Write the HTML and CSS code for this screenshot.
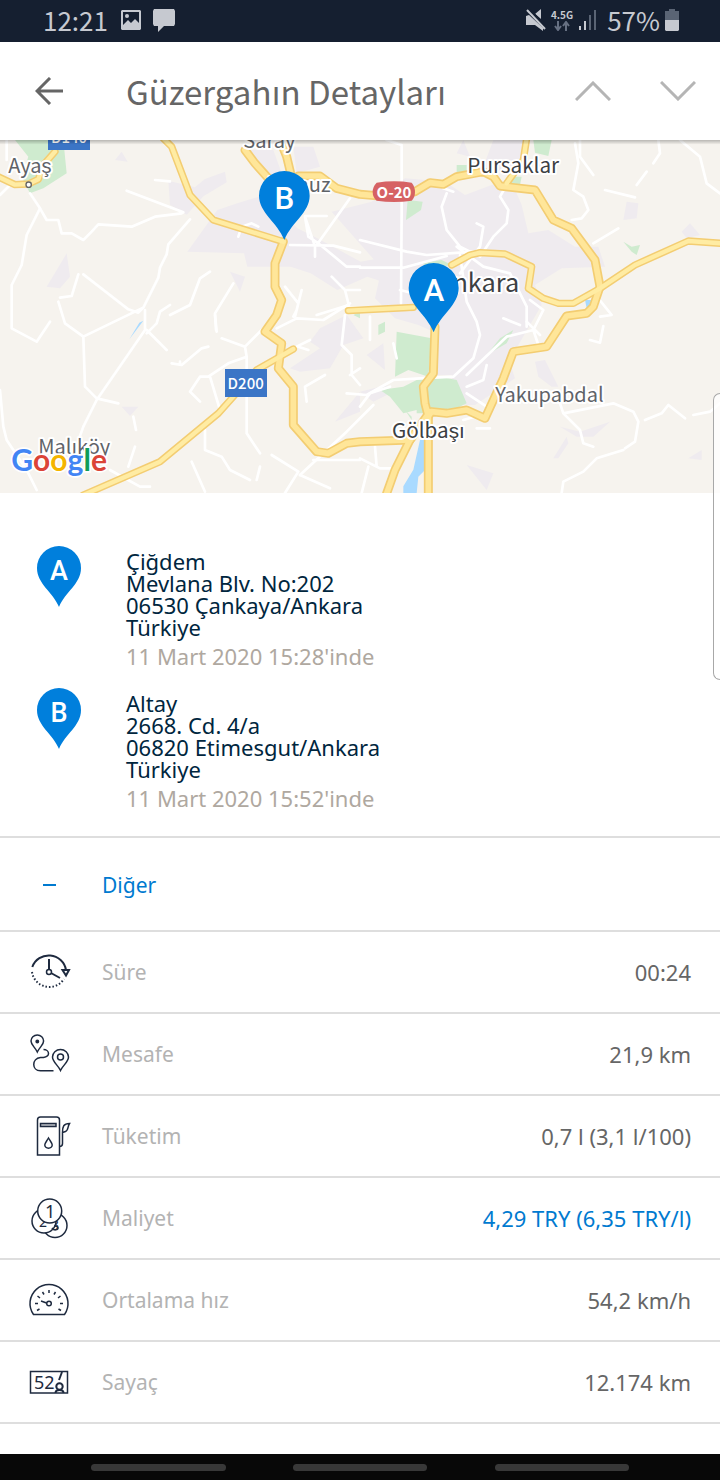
FILE: index.html
```html
<!DOCTYPE html>
<html lang="tr">

<head>
    <meta charset="UTF-8">
    <meta name="viewport" content="width=device-width, initial-scale=1.0">
    <title>Güzergahın Detayları</title>
    <link rel="stylesheet" href="styles.css">
</head>

<body>
    <div class="status-bar">
        <div class="status-left">
            <span class="clock">12:21</span>
            <svg width="22" height="22" viewBox="0 0 22 22">
                <path fill="#c6c9d0" fill-rule="evenodd" d="M2 1h18l1 1v18l-1 1H2l-1-1V2zM3 3v13l5-5 3 3 4-4 4 4V3z" />
                <circle cx="7" cy="7" r="2" fill="#c6c9d0" />
            </svg>
            <svg width="24" height="24" viewBox="0 0 24 24">
                <path fill="#c6c9d0" d="M2 1h20l1 2v13l-1 2H12l-6 6v-6H2l-1-2V3z" />
            </svg>
        </div>
        <div class="status-right">
            <svg width="20" height="22" viewBox="0 0 20 22">
                <path fill="#c6c9d0" d="M0 7l3-1 14 13v3l-8-6H0zM9 5l6-5v10z" />
                <path stroke="#151f30" stroke-width="2" d="M3 0l17 17" />
                <path stroke="#c6c9d0" stroke-width="2" d="M1 1l18 19" />
            </svg>
            <div class="network">
                <span>4.5G</span>
                <svg width="16" height="10" viewBox="0 0 16 10" fill="none" stroke="#667082" stroke-width="2">
                    <path d="M4 0v8M1 5l3 4 3-4M12 10V2M9 5l3-4 3 4" />
                </svg>
            </div>
            <svg width="20" height="22" viewBox="0 0 20 22">
                <path fill="#c6c9d0" d="M1 17h2v4H1zM6 12h2v9H6z" />
                <path fill="#5a6474" d="M11 6h2v15h-2zM16 1h2v20h-2z" />
            </svg>
            <span class="percent">57%</span>
            <svg width="14" height="22" viewBox="0 0 14 22">
                <path fill="#5a6474" d="M4 0h6v2h4v9H0V2h4z" />
                <path fill="#c6c9d0" d="M0 11h14v10l-1 1H1l-1-1z" />
            </svg>
        </div>
    </div>

    <header class="header">
        <button class="icon-btn" aria-label="Geri">
            <svg width="28" height="28" viewBox="0 0 28 28" fill="none" stroke="#666" stroke-width="3">
                <path d="M28 14H2M15 1L2 14l13 13" />
            </svg>
        </button>
        <h1>Güzergahın Detayları</h1>
        <button class="icon-btn" aria-label="Önceki">
            <svg width="36" height="20" viewBox="0 0 36 20" fill="none" stroke="#b5b5b5" stroke-width="3">
                <path d="M1 19L18 2l17 17" />
            </svg>
        </button>
        <button class="icon-btn next" aria-label="Sonraki">
            <svg width="36" height="20" viewBox="0 0 36 20" fill="none" stroke="#b5b5b5" stroke-width="3">
                <path d="M1 1l17 17L35 1" />
            </svg>
        </button>
    </header>

    <svg class="map" viewBox="0 0 2160 1059" role="img" aria-label="Harita">
        <defs>
            <linearGradient id="shade" x1="0" y1="0" x2="0" y2="1">
                <stop offset="0" stop-color="#000" stop-opacity="0.25" />
                <stop offset="1" stop-color="#000" stop-opacity="0" />
            </linearGradient>
        </defs>
        <rect width="2160" height="1059" fill="#f6f3ee" />

        <!-- built-up areas -->
        <g fill="#efebef">
            <path d="M505 122l80 20 30-25 60-22 5 32-70 42-50 55-50-30z" />
            <path d="M750 30l70 0 25 70-40 10zM880 20h60l20 60-70 20z" />
            <path d="M562 335l90-125 60-20 80-25 100 100 60 30 130 70 80-15 80 60-80 20-60-20-90 40-80-50-60-20-130 0-10-40z" />
            <path d="M995 215l120-30 100-70 120 10 60 40 80-30 60-10 30 70 20 85 60-10 80 50 70 0 20 60-130 5-80 50 20 60-70 120-30 40 20 60-120 80-60 0-20-200-90-40-70-20-60-60 20-90z" />
            <path d="M1040 525l-80 40-30 40 30 20-90 60 30 10 90-10 40-70 60-20z" />
            <path d="M1305 545h120l20 60-80 100-60 0zM1100 645l50-35 5 80z" />
            <path d="M1005 845l75-90 0 60zM1080 755l80-20 20 20-60 30z" />
            <path d="M1605 665l30-5 40 80-20 0-40-30zM1680 860l60 15 90-30-50 45-50 0zM1400 975l80 25-20 50z" />
            <path d="M1660 955l40-65 5 20-30 45zM1880 185l35 5-5 45-40 5zM2045 275l25-25 30 35-40 10zM1480 0h100l-10 60-80 40-40-20z" />
            <path d="M140 440l60-100 10 70-30 35zM690 395l45 15-15 45zM365 800h50l-25 28zM345 60l20-25 18 30zM2065 955l40-25 0 30zM1370 40l20-40 20 50z" />
        </g>

        <!-- forest and parks -->
        <g fill="#cfebcf">
            <path d="M45 0h145l10 100-70 45-40 15-25-50 20-60z" />
            <path d="M1600 0h55l-10 48-40-10zM1370 75l30 0 0 25-30 0zM1535 110l30 0-5 25-30-5zM1218 240l5-60 45 5-5 25z" />
            <path d="M1190 575l105 20-10 115-60-20-40 20zM1210 740l40-20 70-10 50 10 30 70-60 30-90-10-40 10-40-50-30-20z" />
            <path d="M1460 645l40-50 40-25-20 40zM1135 555l20-10 0 30-20 10zM1265 370l60-10 30 15-60 10zM1870 305l25 15 25-5-10 30-15-10z" />
            <path d="M1060 525l20-10v20zM1215 810l20 20 0 10zM1250 760h40v60h-40z" />
        </g>

        <!-- water -->
        <g fill="#a9daff">
            <path d="M1260 900l15 0 0 90-20 20-5 49h-40l0-20 30-50z" />
            <path d="M388 598l30-50 12-6zM1755 480l20 0 0 20-15 5z" />
        </g>

        <!-- minor roads -->
        <g fill="none" stroke="#fff" stroke-width="8" stroke-linejoin="round" stroke-linecap="round">
            <path d="M90 160l30 45 20 35h35l10 40 30 0 35 20 25-25 20-22 100 7 70-30 80-10M380 152l170 65M465 120l45 4M570 238l-65 75-5 30-20 40-5 30-45 90-15 15-30-10-135-105" />
            <path d="M120 205l-40 80-15 90-30 60v130l75 40 40-60M180 473l35-5 20-65M175 485l20 65 55 40 5 150 35 35 65 15M250 590l175-85M435 510l0 60-145 210-40 80-25 70M440 570l60 60M440 580l30-30 10-35 30-20" />
            <path d="M0 750l10 110 10 40 60 90 30 60M330 990l90 50 30 0M400 830l8 40M405 920l-20 60M0 165l30-30M20 0l0 60M515 670l30 5 60-50 20-5M540 665l0 5M630 395l-30 20-30 80-60 30M700 430l-55 90 3 50" />
            <path d="M665 595l70 25 5 30-55 20-60 40-25 0-30 45 30 30M740 650l0 230 40 60M630 710l30 100M735 620l60-60M615 870l0 60 50 20 25 40 60 30M575 965l40 90M815 945l80 50-40 64M900 1005l140-130 80-80" />
            <path d="M1080 960h-140M900 1005l90 40M780 980l-10 40M870 315l130 2 80 20M950 315l100-140M915 230l10 60 30 20 85 70h40M915 228h65M945 350v-30l-30-90M715 290l10-30 30-10 20 10" />
            <path d="M855 440l40 50-10 40M905 450l-15 60-10 20M995 410l40 40 15 60M1080 300l140 35 60 10 140-10M1080 383l130 0 130-35M1040 450l40 0M950 525l80-25 200 10M1205 20l0 190-2 280M1160 0l45 15" />
            <path d="M1340 160l-15 40 15 70 40 50 60 30 40-60 40-40 5-40-25-40 20-35M1430 250l20 10-10 60-60 80M1370 320l80 60 80 20 50 100 0 60M1380 345l20 140 30 60 10 40-20 70-60 55-100 5-80 5-80 45-60-5M1330 145l30 10" />
            <path d="M1725 10l10 60-15 80 30 20 15 40-20 25-30 5M1740 0l0 50 40 55M1975 0l5 40-20 30M1940 95l-30 40M1815 150l90 22M2040 0l60 50 20 80 40 30M1780 310l75-45M1800 530l35-5-40-50M1770 600l30 8 10-50" />
            <path d="M1400 705l120-115 80-20 30-60-40-30M1600 570l20 60M1580 545l40 40M1510 535l50 20M1400 740l50-20 10-45M1400 760l60 40 0 20-70 20M1680 790l10 30 50 50 10 40 30 10M1690 820l150-30 60 25 15 30-10 60-30 20" />
            <path d="M1870 930l-80 25-40 40-60 30-5 34M1935 840l50-20 20-25 50 40M2080 825l50-10 30-25M1080 955l60 30h40M1125 920l5 60M1105 980l-20 79M1110 530v70M1180 610l10 45M1035 525l-10 90 30 30v60l25 30M1050 705l30-20" />
            <path d="M830 565l60-30 80 5 80-50M890 620l40-20M895 620l30 10M975 705l-60 35 5 45M645 525l5 50M1430 865h40M1080 800l30-40 60-20M1200 450l80 20 60-30" />
        </g>

        <!-- motorways: casing first, then the fill -->
        <g fill="none" stroke="#f3cd72" stroke-width="27" stroke-linejoin="round" stroke-linecap="round">
            <path id="ring" d="M735 30l30 40 40 45M840 0l20 50 12 50M895 108l65 0 50 37 70 18 60 5L1245 155l45-27 40 5 40-23 80-15 30 15 20 28 105 12 55 90 55 25 70 95 15 80-20 60-20 20-60 8-60 92-100 15-30 80-55 120-55-25-60 10-45-5-65 85-150 5-40 5-55 30-35-5-70-80V740l-45-55 10-75-50-35 35-50 15-45-20-40v-70l25-65" />
            <path id="south" d="M1305 560l-5 140-30 40 5 50 10 40v240M1290 815l-60 85-45 90-25 70" />
        </g>
        <g fill="none" stroke="#f3cd72" stroke-width="22" stroke-linejoin="round" stroke-linecap="round">
            <path id="state" d="M-10 108l55 26 40-2 30-14 15-43 35-40M490-5l25 25 55 145 70 75 210 65M250 1065l230-100 175-145 45-50 70-80 70-40 40-23M1045 512l195-10M1355 375l55-30 30-7 75 4 80 38-10 65 45 30 45 15h45l80-45 105-70 160-72 100 7M1580-5l-10 65-50 70" />
        </g>
        <use href="#ring" fill="none" stroke="#ffe699" stroke-width="17" stroke-linejoin="round" stroke-linecap="round" />
        <use href="#south" fill="none" stroke="#ffe699" stroke-width="17" stroke-linejoin="round" stroke-linecap="round" />
        <use href="#state" fill="none" stroke="#ffeca3" stroke-width="13" stroke-linejoin="round" stroke-linecap="round" />

        <!-- road shields -->
        <rect x="144" y="-40" width="126" height="70" fill="#3b75c6" />
        <text class="shield" x="207" y="8">D140</text>
        <rect x="675" y="687" width="126" height="84" fill="#3b75c6" />
        <text class="shield" x="737" y="748">D200</text>
        <path fill="#d66264" d="M1130 128q52-8 105 0 10 12 10 28t-10 26q-53 8-105 0-12-10-12-26t12-28z" />
        <text class="shield bold" x="1182" y="174">O-20</text>

        <!-- places -->
        <circle cx="86" cy="134" r="8" fill="#fff" stroke="#666" stroke-width="4" />
        <text class="place town" x="25" y="99">Ayaş</text>
        <text class="place town" x="730" y="24">Saray</text>
        <text class="place town" x="806" y="157">Temuz</text>
        <text class="place" x="1402" y="98">Pursaklar</text>
        <text class="place city" x="1311" y="456">Ankara</text>
        <text class="place town" x="1486" y="785">Yakupabdal</text>
        <text class="place" x="1176" y="893">Gölbaşı</text>
        <text class="place town" x="115" y="943">Malıköy</text>

        <!-- markers -->
        <path fill="#007fdc" d="M853 300c-22-55-76-82-76-133a76 74 0 0 1 152 0c0 51-54 78-76 133z" />
        <text class="marker" x="853" y="206">B</text>
        <path fill="#007fdc" d="M1301 577c-22-55-75-82-75-133a75 75 0 0 1 150 0c0 51-53 78-75 133z" />
        <text class="marker" x="1302" y="482">A</text>

        <text class="google" x="34" y="994"><tspan fill="#4285f4">G</tspan><tspan fill="#db4437">o</tspan><tspan fill="#f4b400">o</tspan><tspan fill="#4285f4">g</tspan><tspan fill="#0f9d58">l</tspan><tspan fill="#db4437">e</tspan></text>
        <rect width="2160" height="14" fill="url(#shade)" />
    </svg>

    <ul class="stops">
        <li>
            <svg class="pin" width="46" height="62" viewBox="0 0 46 62">
                <path fill="#007fdc" d="M23 61C17 46 1 38 1 22a22 22 0 0 1 44 0C45 38 29 46 23 61z" />
                <text x="23" y="34">A</text>
            </svg>
            <div>
                <address>Çiğdem<br>Mevlana Blv. No:202<br>06530 Çankaya/Ankara<br>Türkiye</address>
                <time datetime="2020-03-11T15:28">11 Mart 2020 15:28'inde</time>
            </div>
        </li>
        <li>
            <svg class="pin" width="46" height="62" viewBox="0 0 46 62">
                <path fill="#007fdc" d="M23 61C17 46 1 38 1 22a22 22 0 0 1 44 0C45 38 29 46 23 61z" />
                <text x="23" y="34">B</text>
            </svg>
            <div>
                <address>Altay<br>2668. Cd. 4/a<br>06820 Etimesgut/Ankara<br>Türkiye</address>
                <time datetime="2020-03-11T15:52">11 Mart 2020 15:52'inde</time>
            </div>
        </li>
    </ul>

    <button class="toggle"><span class="minus"></span>Diğer</button>

    <ul class="details">
        <li>
            <svg class="icon" viewBox="0 0 48 48">
                <path d="M8.300 19A17.500 17.500 0 0 1 42 22" stroke-width="2" />
                <path d="M8 24a17.500 17.500 0 0 0 32 7" stroke-width="2" stroke-dasharray="1.500 2" />
                <path d="M38.500 22h6.500l-3 5.500zM25 11v10M27 25l9 5" stroke-width="2" />
                <circle cx="25" cy="24" r="2.500" />
            </svg>
            <span class="label">Süre</span>
            <span class="value">00:24</span>
        </li>
        <li>
            <svg class="icon" viewBox="0 0 48 48">
                <path d="M13.300 22C11 17 7 15 7 11a6.300 6 0 0 1 12.600 0c0 4-4 6-6.300 11z" />
                <circle cx="13.300" cy="11.500" r="1.200" fill="#1e2a3f" />
                <path d="M36.500 40.500C34 35 28.500 32 28.500 27a8 7.500 0 0 1 16 0c0 5-5.500 8-8 13.500z" />
                <circle cx="36.500" cy="27" r="3" />
                <path d="M19.500 19.500c3 0 5 2 5 4s-2 3.500-5 4h-3c-9 1-9 13 0 13.300h13" />
            </svg>
            <span class="label">Mesafe</span>
            <span class="value">21,9 km</span>
        </li>
        <li>
            <svg class="icon" viewBox="0 0 48 48">
                <path d="M13.500 43V8q0-3 3-3h16q3 0 3 3v35z" />
                <path d="M16.500 11.500h15.500v3H16.500z" fill="#bfc3ca" />
                <path d="M24.500 26c-2 3.500-3.700 5-3.700 7a3.700 3.200 0 0 0 7.400 0c0-2-1.700-3.500-3.700-7zM35.500 34.500q3 0 3-3V20.500c0-6 1-9 7-9-2 3-1 7-4 8l-3 1" />
            </svg>
            <span class="label">Tüketim</span>
            <span class="value">0,7 l (3,1 l/100)</span>
        </li>
        <li>
            <svg class="icon" viewBox="0 0 48 48">
                <circle cx="31" cy="31.500" r="12" />
                <text x="27" y="36" font-size="14">3</text>
                <circle cx="20" cy="27" r="12" fill="#fff" />
                <text x="15" y="33" font-size="14">2</text>
                <path d="M28 34c2 3 6 2 6 0s-2-2-4-2" />
                <circle cx="25.700" cy="17" r="12" fill="#fff" />
                <text x="21" y="24" font-size="18">1</text>
            </svg>
            <span class="label">Maliyet</span>
            <a class="value" href="#">4,29 TRY (6,35 TRY/l)</a>
        </li>
        <li>
            <svg class="icon" viewBox="0 0 48 48">
                <path d="M9.500 38.500a19 19 0 1 1 31 0z" />
                <circle cx="25" cy="27.500" r="2.300" />
                <path d="M17 25l5.500 2M11 27.500h3M36 27.500h3M25 14v3M18.500 16l1.500 2.500M31.500 16L30 18.500M13.500 20l2.500 2M36.500 20L34 22M13 34.500l2.500-1.500M37 34.500L34.500 33" />
            </svg>
            <span class="label">Ortalama hız</span>
            <span class="value">54,2 km/h</span>
        </li>
        <li>
            <svg class="icon" viewBox="0 0 48 48">
                <path d="M6.500 13.500h37v21.500h-37z" />
                <text x="10" y="31" font-size="18">52</text>
                <path d="M38 14l-3 8" stroke-width="2" />
                <circle cx="35.500" cy="28.500" r="3.200" stroke-width="2" />
                <path d="M31.500 35c0-4 8-4 8 0" stroke-width="2" />
            </svg>
            <span class="label">Sayaç</span>
            <span class="value">12.174 km</span>
        </li>
    </ul>

    <div class="nav-bar">
        <span></span>
        <span></span>
        <span></span>
    </div>

    <div class="edge-handle"></div>
</body>

</html>
```

FILE: styles.css
```css
* {
    box-sizing: border-box;
}

body {
    margin: 0;
    min-height: 100vh;
    display: flex;
    flex-direction: column;
    background-color: #fff;
    font-family: 'Noto Sans', 'Open Sans', sans-serif;
    font-size: 21px;
    line-height: 22px;
}

ul {
    list-style: none;
    margin: 0;
    padding: 0;
}

svg {
    display: block;
    flex-shrink: 0;
}

button {
    border: 0;
    padding: 0;
    background: none;
    font: inherit;
    cursor: pointer;
}

/* status bar */
.status-bar {
    height: 42px;
    padding: 0 41px 2px 43px;
    display: flex;
    justify-content: space-between;
    background-color: #151f30;
    color: #c6c9d0;
    font-family: 'Noto Sans CJK SC', sans-serif;
    font-size: 26px;
}

.status-left,
.status-right {
    display: flex;
    align-items: center;
}

.status-left {
    gap: 10px;
}

.clock {
    margin-right: 2px;
}

.status-right {
    gap: 5px;
}

.percent {
    margin-left: 4px;
}

.network {
    display: flex;
    flex-direction: column;
    align-items: center;
    font-size: 10px;
    font-weight: bold;
    line-height: 12px;
}

/* header */
.header {
    height: 98px;
    padding: 0 24px 0 35px;
    display: flex;
    align-items: center;
}

.header h1 {
    flex: 1;
    margin: 0 0 0 63px;
    color: #666;
    font-family: 'Noto Sans CJK SC', sans-serif;
    font-size: 33px;
    font-weight: normal;
    line-height: 48px;
}

.next {
    margin-left: 49px;
}

/* map */
.map {
    width: 100%;
    height: auto;
}

.map text {
    font-family: 'Noto Sans CJK SC', sans-serif;
}

.map .place {
    font-size: 62px;
    fill: #3c4043;
    stroke: #fff;
    stroke-width: 12px;
    stroke-linejoin: round;
    paint-order: stroke;
}

.map .town {
    font-size: 60px;
    fill: #5f6368;
}

.map .city {
    font-size: 76px;
}

.map .shield {
    font-size: 45px;
    font-weight: 500;
    fill: #fff;
    text-anchor: middle;
}

.map .bold {
    font-weight: bold;
}

.map .marker {
    font-family: Roboto, sans-serif;
    font-size: 94px;
    font-weight: 500;
    fill: #fff;
    text-anchor: middle;
}

.map .google {
    font-family: Lato, sans-serif;
    font-size: 90px;
    font-weight: bold;
    stroke: #fff;
    stroke-width: 10px;
    paint-order: stroke;
}

/* start and end of the route */
.stops {
    padding: 53px 36px 27px;
    display: flex;
    flex-direction: column;
    gap: 21px;
    border-bottom: 2px solid #dedede;
    font-size: 22px;
}

.stops li {
    display: flex;
    gap: 44px;
}

.stops li > div {
    padding-top: 4px;
}

.pin text {
    font-family: Roboto, sans-serif;
    font-size: 27px;
    font-weight: 500;
    fill: #fff;
    text-anchor: middle;
}

address {
    color: #00263e;
    font-style: normal;
}

time {
    display: block;
    margin-top: 7px;
    color: #afa8a0;
}

/* details */
.toggle {
    height: 94px;
    padding: 2px 29px 0 43px;
    display: flex;
    align-items: center;
    gap: 46px;
    border-bottom: 2px solid #dedede;
    color: #007ad0;
}

.minus {
    width: 13px;
    height: 2px;
    background-color: #007ad0;
}

.details li {
    height: 82px;
    padding: 0 29px 0 24px;
    display: flex;
    align-items: center;
    border-bottom: 2px solid #dedede;
}

.icon {
    width: 48px;
    height: 48px;
    margin-right: 30px;
    fill: none;
    stroke: #1e2a3f;
    stroke-width: 1.5px;
}

.icon text {
    fill: #1e2a3f;
    stroke: none;
}

.label {
    flex: 1;
    color: #b3b3b3;
}

.value {
    color: #666;
    font-size: 22px;
    text-decoration: none;
}

a.value {
    color: #007ad0;
}

/* bottom navigation */
.nav-bar {
    height: 26px;
    margin-top: auto;
    padding: 0 91px;
    display: flex;
    justify-content: space-between;
    align-items: center;
    background-color: #080808;
}

.nav-bar span {
    width: 25%;
    height: 7px;
    border-radius: 4px;
    background-color: #383838;
}

.edge-handle {
    position: fixed;
    top: 393px;
    right: 0;
    width: 7px;
    height: 287px;
    border: 1px solid #a8a8a8;
    border-right: 0;
    border-radius: 10px 0 0 10px;
    background-color: rgba(255, 255, 255, 0.75);
}
```
